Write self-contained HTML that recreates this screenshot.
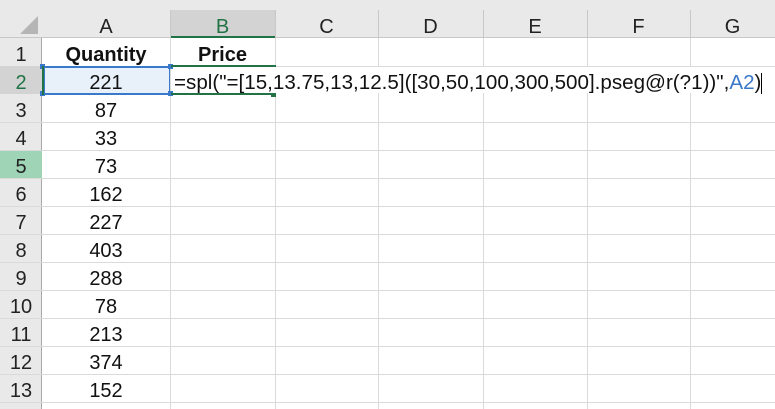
<!DOCTYPE html><html><head><style>
html,body{margin:0;width:775px;height:409px;overflow:hidden}
body{background:#fff;font-family:"Liberation Sans",sans-serif;position:relative}
.a{position:absolute;box-sizing:border-box}
.t{position:absolute;font-size:20px;color:#111;text-align:center;line-height:28px;padding-top:3px;box-sizing:border-box;height:28px;overflow:hidden}
</style></head><body>
<div class="a" style="left:0;top:0;width:775px;height:10px;background:#e9e9e9"></div>
<div class="a" style="left:0;top:10px;width:775px;height:28px;background:#e9e9e9;border-bottom:1px solid #c8c8c8"></div>
<div class="a" style="left:0;top:38px;width:42px;height:371px;background:#e9e9e9;border-right:1px solid #a8a8a8"></div>
<div class="a" style="left:170px;top:10px;width:105px;height:28px;background:#d3d3d3;border-bottom:2px solid #217346"></div>
<div class="a" style="left:0;top:66px;width:42px;height:28px;background:#d3d3d3"></div>
<div class="a" style="left:0;top:150px;width:42px;height:28px;background:#9fd5b6"></div>
<svg class="a" style="left:18px;top:14px" width="22" height="22"><polygon points="20,2 20,20 2,20" fill="#b5b5b5"/></svg>
<div class="a" style="left:43px;top:66px;width:128px;height:29px;background:#e8f0fa;border:2px solid #3a78c9"></div>
<div id="g"></div>
<div class="a" style="left:40px;top:64px;width:5px;height:5px;background:#3a78c9"></div>
<div class="a" style="left:168px;top:64px;width:5px;height:5px;background:#3a78c9"></div>
<div class="a" style="left:40px;top:91px;width:5px;height:5px;background:#3a78c9"></div>
<div class="a" style="left:168px;top:91px;width:5px;height:5px;background:#3a78c9"></div>
<div class="a" style="left:42px;top:66px;width:2px;height:29px;background:#217346"></div>
<div class="a" style="left:171px;top:65px;width:105px;height:2px;background:#217346"></div>
<div class="a" style="left:171px;top:93px;width:105px;height:2px;background:#217346"></div>
<div class="a" style="left:271px;top:92px;width:5px;height:5px;background:#217346"></div>
<div class="a" style="left:173px;top:67px;width:602px;height:26px;background:#fff"></div>
<div class="t" style="left:174px;top:66px;width:601px;text-align:left;white-space:nowrap;font-size:20.6px">=spl("=[15,13.75,13,12.5]([30,50,100,300,500].pseg@r(?1))",<span style="color:#3a78c9">A2</span>)<span style="display:inline-block;width:1px;height:22px;background:#000;vertical-align:middle"></span></div>
<script>
var cols=[42,170,275,378,483,587,690,775],L="ABCDEFG",h="";
for(var i=0;i<7;i++){h+='<div class="t" style="left:'+cols[i]+'px;top:10px;width:'+(cols[i+1]-cols[i])+'px;color:'+(i==1?'#217346':'#222')+'">'+L[i]+'</div>';
if(i>0)h+='<div class="a" style="left:'+cols[i]+'px;top:10px;width:1px;height:28px;background:#c8c8c8"></div>';
h+='<div class="a" style="left:'+(cols[i+1])+'px;top:38px;width:1px;height:371px;background:#dadada"></div>';}
var q=["<b>Quantity</b>",221,87,33,73,162,227,403,288,78,213,374,152];
for(var r=0;r<13;r++){var y=38+r*28;
if(r!=0&&r!=1)h+='<div class="a" style="left:0;top:'+(y+28)+'px;width:775px;height:1px;background:#dadada"></div>';
else if(r==0)h+='<div class="a" style="left:275px;top:'+(y+28)+'px;width:500px;height:1px;background:#dadada"></div>';
h+='<div class="t" style="left:0;top:'+y+'px;width:42px;color:'+(r==1?'#217346':'#222')+'">'+(r+1)+'</div>';
h+='<div class="t" style="left:42px;top:'+y+'px;width:128px">'+q[r]+'</div>';}
h+='<div class="t" style="left:170px;top:38px;width:105px"><b>Price</b></div>';
document.getElementById("g").outerHTML=h;
</script>
</body></html>
